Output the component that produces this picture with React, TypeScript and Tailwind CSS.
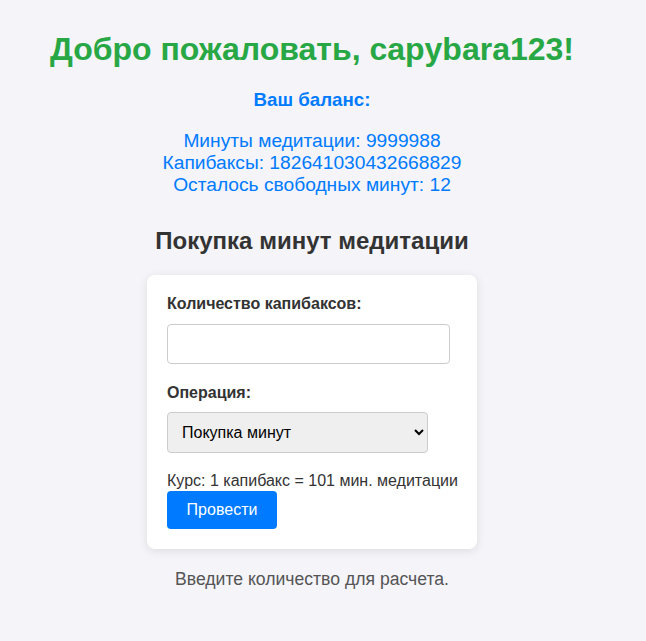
export default function App() {
  return (
    <div className="min-h-[641px] bg-[#f4f4f9] font-['Liberation_Sans',Arial,sans-serif] text-[#333]">
      <div className="flex flex-col items-center pr-[22px] pt-[31px] text-center">
        <h1 className="text-[32px] font-bold leading-[37px] text-[#28a745]">Добро пожаловать, capybara123!</h1>

        <h3 className="mt-[21px] text-[18.72px] font-bold leading-[22px] text-[#007bff]">Ваш баланс:</h3>
        <p className="mt-[19px] text-[19.2px] leading-[22px] text-[#007bff]">
          Минуты медитации: 9999988
          <br />
          Капибаксы: 182641030432668829
          <br />
          Осталось свободных минут: 12
        </p>

        <h2 className="mt-[31px] text-[24px] font-bold leading-[28px] text-[#333]">Покупка минут медитации</h2>

        <form className="mt-[20px] flex w-[330px] flex-col items-start rounded-lg bg-white p-5 text-left shadow-[0_2px_10px_rgba(0,0,0,0.1)]">
          <label className="text-base font-bold leading-[18px]">Количество капибаксов:</label>
          <input
            type="number"
            className="mt-[11px] h-[40px] w-[283px] rounded border border-[#ccc] bg-white px-[10px] outline-none"
          />

          <label className="mt-[20px] text-base font-bold leading-[18px]">Операция:</label>
          <select className="mt-[10px] h-[41px] w-[261px] rounded border border-[#ccc] bg-[#efefef] px-[10px] text-base text-black">
            <option>Покупка минут</option>
            <option>Продажа минут</option>
          </select>

          <p className="mt-[19px] whitespace-nowrap text-base leading-[18px]">Курс: 1 капибакс = 101 мин. медитации</p>
          <button
            type="button"
            className="mt-px h-[38px] w-[110px] rounded bg-[#007bff] text-base text-white"
          >
            Провести
          </button>
        </form>

        <p className="mt-[20px] text-[17.6px] leading-[20px] text-[#555]">Введите количество для расчета.</p>
      </div>
    </div>
  )
}
